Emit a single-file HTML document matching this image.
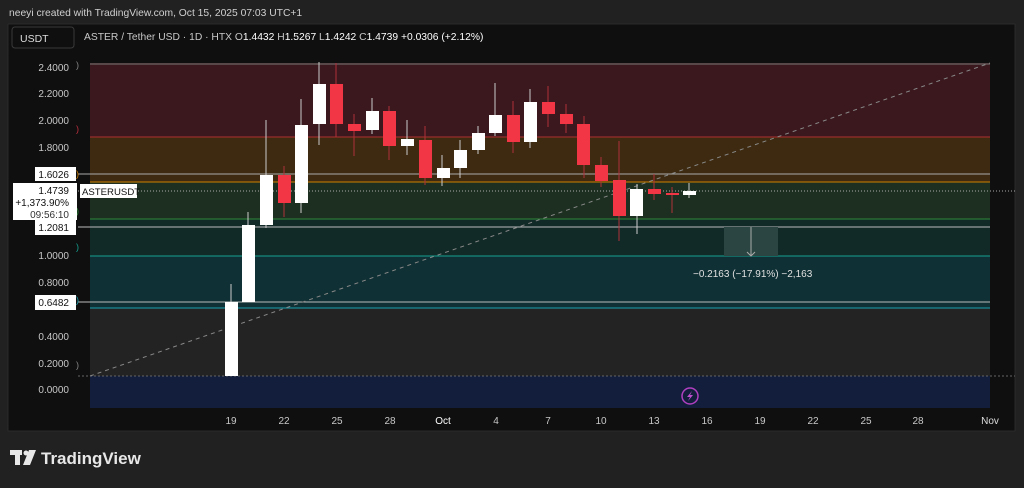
<!DOCTYPE html><html><head><style>
body{margin:0;width:1024px;height:483px;background:#212121;overflow:hidden;font-family:"Liberation Sans",sans-serif}
</style></head><body>
<svg width="1024" height="483" xmlns="http://www.w3.org/2000/svg" font-family="Liberation Sans, sans-serif">
<rect x="8" y="24" width="1007" height="407" fill="#0f0f0f" stroke="#2a2a2a"/>
<text x="9" y="16" fill="#d0d0d0" font-size="10.3">neeyi created with TradingView.com, Oct 15, 2025 07:03 UTC+1</text>
<rect x="12" y="27" width="62" height="21" rx="3" fill="#0f0f0f" stroke="#3a3a3a"/>
<text x="20" y="42" fill="#ddd" font-size="10.5">USDT</text>
<text x="84" y="40" fill="#c8c8c8" font-size="10.3">ASTER / Tether USD · 1D · HTX  O<tspan fill="#fff">1.4432</tspan>  H<tspan fill="#fff">1.5267</tspan>  L<tspan fill="#fff">1.4242</tspan>  C<tspan fill="#fff">1.4739</tspan>  <tspan fill="#fff">+0.0306 (+2.12%)</tspan></text>
<rect x="90" y="63" width="900" height="74" fill="#3a181e"/>
<rect x="90" y="137" width="900" height="45" fill="#3d2a10"/>
<rect x="90" y="182" width="900" height="37" fill="#1c2f20"/>
<rect x="90" y="219" width="900" height="37" fill="#112a27"/>
<rect x="90" y="256" width="900" height="52" fill="#0f3034"/>
<rect x="90" y="308" width="900" height="68" fill="#232323"/>
<rect x="90" y="376" width="900" height="32" fill="#131e3d"/>
<line x1="90" y1="64" x2="990" y2="64" stroke="#777"/>
<line x1="90" y1="137" x2="990" y2="137" stroke="#b03030"/>
<line x1="90" y1="182" x2="990" y2="182" stroke="#d08000"/>
<line x1="90" y1="219" x2="990" y2="219" stroke="#2f8a3a"/>
<line x1="90" y1="256" x2="990" y2="256" stroke="#16a08f"/>
<line x1="90" y1="308" x2="990" y2="308" stroke="#1aa0b0"/>
<line x1="78" y1="376" x2="1015" y2="376" stroke="#666" stroke-dasharray="2 2"/>
<line x1="78" y1="174" x2="990" y2="174" stroke="#aaa"/>
<line x1="78" y1="191" x2="1015" y2="191" stroke="#aaa" stroke-dasharray="1 2"/>
<line x1="78" y1="227" x2="990" y2="227" stroke="#bbb"/>
<line x1="78" y1="302" x2="990" y2="302" stroke="#bbb"/>
<line x1="90" y1="376" x2="990" y2="63" stroke="#888" stroke-dasharray="4 4"/>
<g font-size="9"><text x="76" y="68" fill="#888">)</text><text x="76" y="132" fill="#c03040">)</text><text x="76" y="177" fill="#d08000">)</text><text x="76" y="214" fill="#2f8a3a">)</text><text x="76" y="250" fill="#16a08f">)</text><text x="76" y="303" fill="#1aa0b0">)</text><text x="76" y="368" fill="#888">)</text></g>
<rect x="724" y="227" width="54" height="29" fill="#2b4642"/>
<line x1="751" y1="227" x2="751" y2="256" stroke="#aaa"/>
<polyline points="747,252 751,256 755,252" fill="none" stroke="#aaa"/>
<text x="693" y="277" fill="#e0e0e0" font-size="10">−0.2163 (−17.91%) −2,163</text>
<g stroke-width="1">
<line x1="231" y1="284" x2="231" y2="376" stroke="#ccc"/><rect x="225" y="302" width="13" height="74" fill="#fff"/>
<line x1="248" y1="212" x2="248" y2="302" stroke="#ccc"/><rect x="242" y="225" width="13" height="77" fill="#fff"/>
<line x1="266" y1="120" x2="266" y2="228" stroke="#ccc"/><rect x="260" y="175" width="13" height="50" fill="#fff"/>
<line x1="284" y1="166" x2="284" y2="217" stroke="#b0303a"/><rect x="278" y="175" width="13" height="28" fill="#f23645"/>
<line x1="301" y1="99" x2="301" y2="213" stroke="#ccc"/><rect x="295" y="125" width="13" height="78" fill="#fff"/>
<line x1="319" y1="62" x2="319" y2="145" stroke="#ccc"/><rect x="313" y="84" width="13" height="40" fill="#fff"/>
<line x1="336" y1="63" x2="336" y2="137" stroke="#b0303a"/><rect x="330" y="84" width="13" height="40" fill="#f23645"/>
<line x1="354" y1="114" x2="354" y2="156" stroke="#b0303a"/><rect x="348" y="124" width="13" height="7" fill="#f23645"/>
<line x1="372" y1="98" x2="372" y2="134" stroke="#ccc"/><rect x="366" y="111" width="13" height="19" fill="#fff"/>
<line x1="389" y1="106" x2="389" y2="160" stroke="#b0303a"/><rect x="383" y="111" width="13" height="35" fill="#f23645"/>
<line x1="407" y1="120" x2="407" y2="155" stroke="#ccc"/><rect x="401" y="139" width="13" height="7" fill="#fff"/>
<line x1="425" y1="126" x2="425" y2="185" stroke="#b0303a"/><rect x="419" y="140" width="13" height="38" fill="#f23645"/>
<line x1="442" y1="155" x2="442" y2="186" stroke="#ccc"/><rect x="437" y="168" width="13" height="10" fill="#fff"/>
<line x1="460" y1="140" x2="460" y2="178" stroke="#ccc"/><rect x="454" y="150" width="13" height="18" fill="#fff"/>
<line x1="478" y1="126" x2="478" y2="154" stroke="#ccc"/><rect x="472" y="133" width="13" height="17" fill="#fff"/>
<line x1="495" y1="83" x2="495" y2="136" stroke="#ccc"/><rect x="489" y="115" width="13" height="18" fill="#fff"/>
<line x1="513" y1="101" x2="513" y2="153" stroke="#b0303a"/><rect x="507" y="115" width="13" height="27" fill="#f23645"/>
<line x1="530" y1="89" x2="530" y2="148" stroke="#ccc"/><rect x="524" y="102" width="13" height="40" fill="#fff"/>
<line x1="548" y1="86" x2="548" y2="127" stroke="#b0303a"/><rect x="542" y="102" width="13" height="12" fill="#f23645"/>
<line x1="566" y1="104" x2="566" y2="133" stroke="#b0303a"/><rect x="560" y="114" width="13" height="10" fill="#f23645"/>
<line x1="584" y1="116" x2="584" y2="178" stroke="#b0303a"/><rect x="577" y="124" width="13" height="41" fill="#f23645"/>
<line x1="601" y1="157" x2="601" y2="187" stroke="#b0303a"/><rect x="595" y="165" width="13" height="16" fill="#f23645"/>
<line x1="619" y1="141" x2="619" y2="241" stroke="#b0303a"/><rect x="613" y="180" width="13" height="36" fill="#f23645"/>
<line x1="637" y1="184" x2="637" y2="234" stroke="#ccc"/><rect x="630" y="189" width="13" height="27" fill="#fff"/>
<line x1="654" y1="174" x2="654" y2="200" stroke="#b0303a"/><rect x="648" y="189" width="13" height="5" fill="#f23645"/>
<line x1="672" y1="187" x2="672" y2="213" stroke="#b0303a"/><rect x="666" y="193" width="13" height="2" fill="#f23645"/>
<line x1="689" y1="183" x2="689" y2="198" stroke="#ccc"/><rect x="683" y="191" width="13" height="4" fill="#fff"/>
</g>
<g fill="#c8c8c8" font-size="10" text-anchor="end">
<text x="69" y="71">2.4000</text><text x="69" y="97">2.2000</text><text x="69" y="124">2.0000</text><text x="69" y="151">1.8000</text>
<text x="69" y="259">1.0000</text><text x="69" y="286">0.8000</text><text x="69" y="340">0.4000</text><text x="69" y="367">0.2000</text><text x="69" y="393">0.0000</text>
</g>
<rect x="35" y="167" width="41" height="14" fill="#fff"/><text x="69" y="178" font-size="10" text-anchor="end" fill="#111">1.6026</text>
<rect x="13" y="183" width="64" height="37" fill="#fff"/>
<text x="69" y="194" font-size="10" text-anchor="end" fill="#111">1.4739</text>
<text x="69" y="206" font-size="10" text-anchor="end" fill="#111">+1,373.90%</text>
<text x="69" y="218" font-size="10" text-anchor="end" fill="#333">09:56:10</text>
<rect x="80" y="184" width="57" height="14" fill="#fff"/><text x="82" y="195" font-size="9.6" fill="#111">ASTERUSDT</text>
<rect x="35" y="220" width="41" height="15" fill="#fff"/><text x="69" y="231" font-size="10" text-anchor="end" fill="#111">1.2081</text>
<rect x="35" y="295" width="41" height="15" fill="#fff"/><text x="69" y="306" font-size="10" text-anchor="end" fill="#111">0.6482</text>
<g fill="#c8c8c8" font-size="10" text-anchor="middle">
<text x="231" y="424">19</text><text x="284" y="424">22</text><text x="337" y="424">25</text><text x="390" y="424">28</text><text x="443" y="424" fill="#fff">Oct</text><text x="496" y="424">4</text><text x="548" y="424">7</text><text x="601" y="424">10</text><text x="654" y="424">13</text><text x="707" y="424">16</text><text x="760" y="424">19</text><text x="813" y="424">22</text><text x="866" y="424">25</text><text x="918" y="424">28</text><text x="990" y="424" fill="#ddd">Nov</text>
</g>
<circle cx="690" cy="396" r="8" fill="none" stroke="#b040c0" stroke-width="1.5"/>
<path d="M692 391 L687 397 L690 397 L688 401 L693 395 L690 395 Z" fill="#c050d0"/>
<g fill="#e8e8e8"><rect x="10" y="450" width="12" height="5"/><rect x="15" y="450" width="5" height="15"/><circle cx="26" cy="453" r="2.5"/><path d="M29 450 L36 450 L30 465 L23 465 Z"/></g>
<text x="41" y="464" fill="#e8e8e8" font-size="17" font-weight="bold">TradingView</text>
</svg>
</body></html>
